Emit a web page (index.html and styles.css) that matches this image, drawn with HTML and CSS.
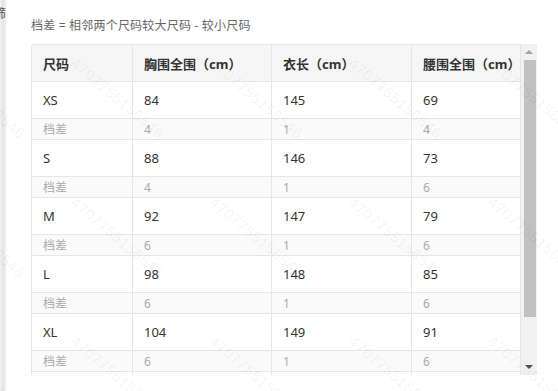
FILE: index.html
```html
<!DOCTYPE html>
<html lang="zh-CN">
<head>
<meta charset="utf-8">
<title>尺码表</title>
<link rel="stylesheet" href="styles.css">
</head>
<body>
<div class="page">
  <div class="side"><span class="side-text">筛</span></div>
  <div class="main">
    <p class="note">档差 = 相邻两个尺码较大尺码 - 较小尺码</p>
    <div class="box">
      <div class="grid">
        <div class="row head"><div class="c">尺码</div><div class="c">胸围全围（cm）</div><div class="c">衣长（cm）</div><div class="c">腰围全围（cm）</div></div>
        <div class="row data"><div class="c">XS</div><div class="c">84</div><div class="c">145</div><div class="c">69</div></div>
        <div class="row diff"><div class="c">档差</div><div class="c">4</div><div class="c">1</div><div class="c">4</div></div>
        <div class="row data"><div class="c">S</div><div class="c">88</div><div class="c">146</div><div class="c">73</div></div>
        <div class="row diff"><div class="c">档差</div><div class="c">4</div><div class="c">1</div><div class="c">6</div></div>
        <div class="row data"><div class="c">M</div><div class="c">92</div><div class="c">147</div><div class="c">79</div></div>
        <div class="row diff"><div class="c">档差</div><div class="c">6</div><div class="c">1</div><div class="c">6</div></div>
        <div class="row data"><div class="c">L</div><div class="c">98</div><div class="c">148</div><div class="c">85</div></div>
        <div class="row diff"><div class="c">档差</div><div class="c">6</div><div class="c">1</div><div class="c">6</div></div>
        <div class="row data"><div class="c">XL</div><div class="c">104</div><div class="c">149</div><div class="c">91</div></div>
        <div class="row diff"><div class="c">档差</div><div class="c">6</div><div class="c">1</div><div class="c">6</div></div>
        <div class="row data"><div class="c"></div><div class="c"></div><div class="c"></div><div class="c"></div></div>
      </div>
      <div class="sbar">
        <div class="sbtn"><span class="tri up"></span></div>
        <div class="strack"><div class="sthumb"></div></div>
        <div class="sbtn"><span class="tri down"></span></div>
      </div>
    </div>
  </div>
</div>
<div class="wm-clip">
  <div class="wm">
    <span>4707755156546</span><span>4707755156546</span><span>4707755156546</span><span>4707755156546</span><span>4707755156546</span>
    <span>4707755156546</span><span>4707755156546</span><span>4707755156546</span><span>4707755156546</span><span>4707755156546</span>
    <span>4707755156546</span><span>4707755156546</span><span>4707755156546</span><span>4707755156546</span><span>4707755156546</span>
  </div>
</div>
</body>
</html>
```

FILE: styles.css
```css
html, body {
  margin: 0;
  padding: 0;
  background: #fff;
  width: 558px;
  height: 391px;
  overflow: hidden;
}
body {
  font-family: "Noto Sans", "Noto Sans CJK SC", sans-serif;
  color: #333;
  position: relative;
}
.page {
  display: flex;
  height: 391px;
}
.side {
  width: 7px;
  flex: none;
  overflow: hidden;
  display: flex;
  justify-content: flex-end;
  background: linear-gradient(to right, #f4f4f4 0, #e3e3e3 3px, #f3f3f3 6px, #fff 7px);
}
.side-text {
  font-size: 12px;
  line-height: 16px;
  margin-top: 6px;
  margin-right: 1px;
  color: #555;
  flex: none;
}
.main {
  padding-left: 24px;
  padding-top: 18px;
}
.note {
  margin: 0 0 10px;
  font-size: 12px;
  line-height: 16px;
  color: #666;
  letter-spacing: 0.2px;
}
.box {
  display: flex;
  width: 506px;
  height: 331px;
}
.grid {
  width: 489px;
  height: 330px;
  overflow: hidden;
  border-left: 1px solid #e6e6e6;
  border-top: 1px solid #e6e6e6;
  border-top-left-radius: 4px;
}
.row {
  display: grid;
  grid-template-columns: 101px 139px 140px 109px;
}
.c {
  border-right: 1px solid #e6e6e6;
  border-bottom: 1px solid #e6e6e6;
  padding-left: 11px;
  display: flex;
  align-items: center;
  white-space: nowrap;
}
.head .c {
  height: 36px;
  background: #f6f6f6;
  font-weight: bold;
  font-size: 13px;
  color: #333;
}
.data .c {
  height: 36px;
  font-size: 13px;
  color: #333;
}
.diff .c {
  height: 20px;
  background: #fafafa;
  font-size: 12px;
  color: #aaa;
}
.sbar {
  width: 16px;
  height: 331px;
  background: #f1f1f1;
  display: flex;
  flex-direction: column;
}
.sbtn {
  height: 16px;
  flex: none;
  display: flex;
  align-items: center;
  justify-content: center;
}
.strack {
  flex: 1;
}
.sthumb {
  height: 257px;
  margin: 0 1px 0 3px;
  background: #c1c1c1;
}
.tri {
  width: 0;
  height: 0;
  border-left: 4px solid transparent;
  border-right: 4px solid transparent;
}
.tri.up {
  border-bottom: 4px solid #a3a3a3;
}
.tri.down {
  border-top: 4px solid #505050;
}
.wm-clip {
  position: absolute;
  left: 0;
  top: 0;
  width: 558px;
  height: 391px;
  overflow: hidden;
  pointer-events: none;
}
.wm {
  position: absolute;
  left: -61px;
  top: 55px;
  display: grid;
  grid-template-columns: repeat(5, 139px);
  grid-auto-rows: 139px;
}
.wm span {
  display: block;
  font-family: "Liberation Sans", sans-serif;
  font-size: 15px;
  letter-spacing: 0.6px;
  line-height: 15px;
  color: rgba(0, 0, 0, 0.06);
  white-space: nowrap;
  transform: rotate(40deg);
  transform-origin: 0 0;
  width: 0;
}
```
